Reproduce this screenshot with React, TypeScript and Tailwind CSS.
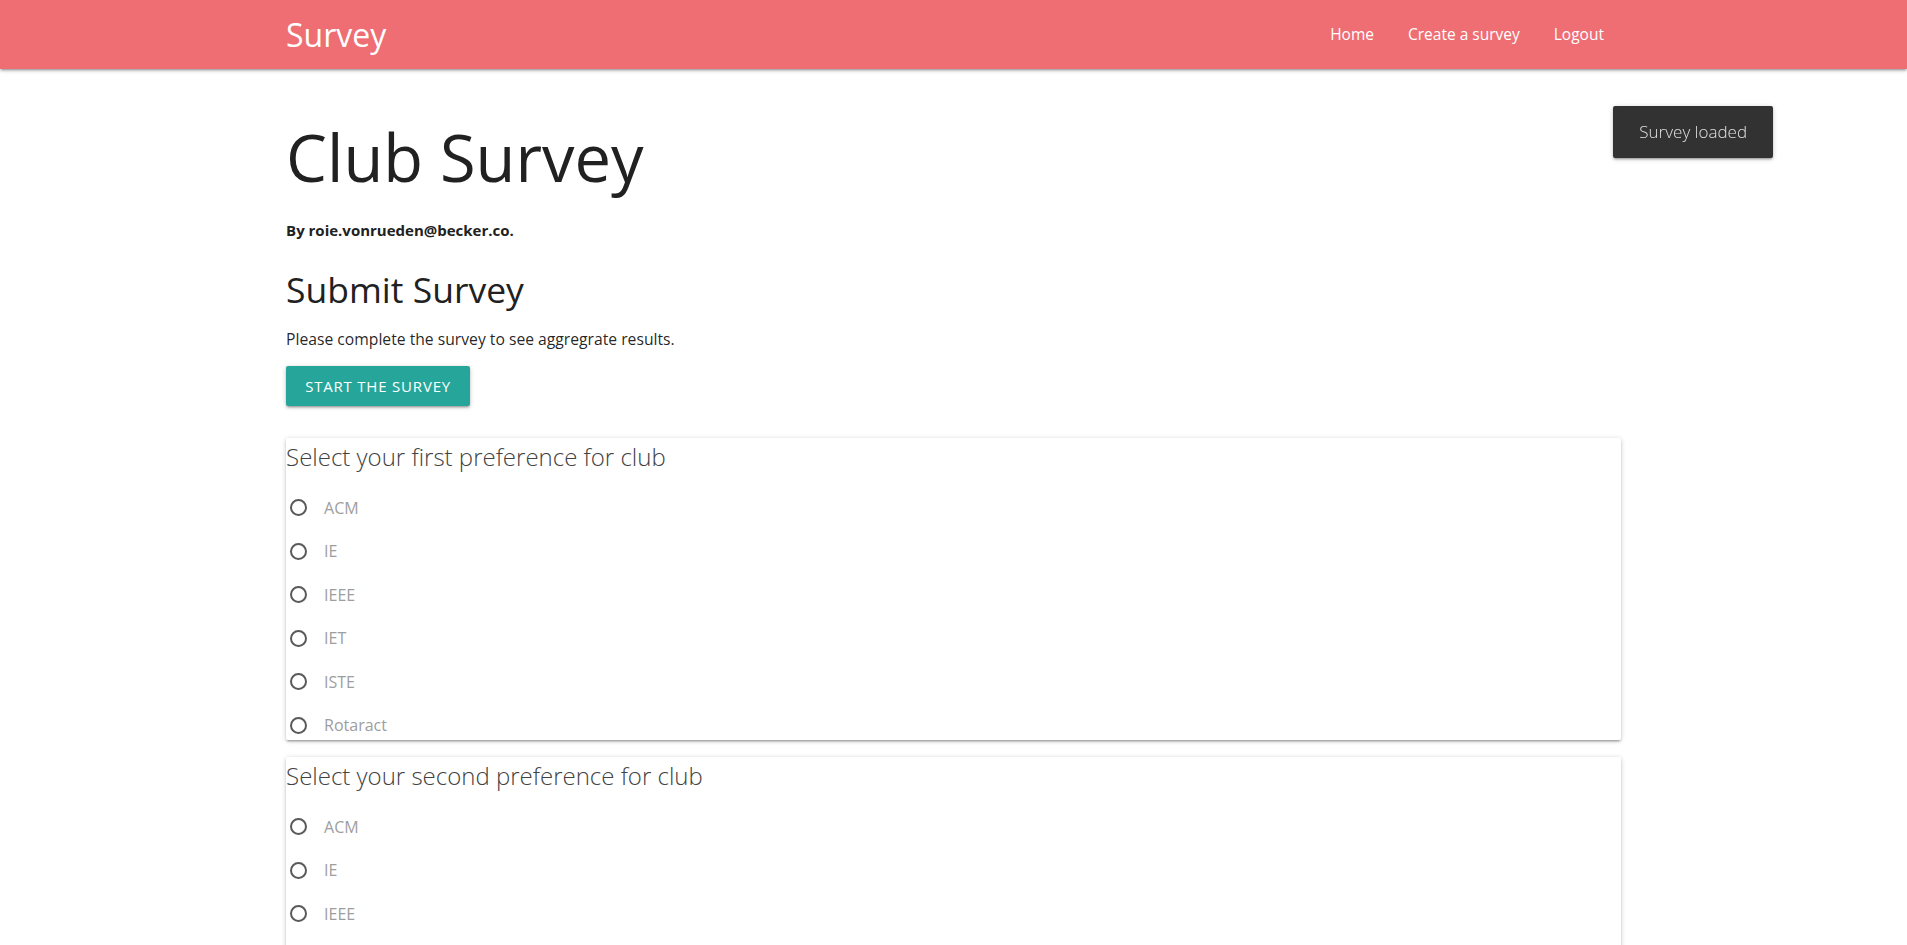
import { useState } from 'react';

const CLUBS = ['ACM', 'IE', 'IEEE', 'IET', 'ISTE', 'Rotaract'];

const QUESTIONS = [
  { id: 'first', title: 'Select your first preference for club' },
  { id: 'second', title: 'Select your second preference for club' },
];

function Radio({ name, label, checked, onChange }: { name: string; label: string; checked: boolean; onChange: () => void }) {
  return (
    <label className="flex h-[43.5px] cursor-pointer items-center">
      <input type="radio" name={name} checked={checked} onChange={onChange} className="sr-only" />
      <span
        className={`ml-[4px] h-[17px] w-[17px] shrink-0 rounded-full border-2 ${
          checked ? 'border-[#26a69a] bg-[#26a69a]' : 'border-[#5a5a5a]'
        }`}
      />
      <span className="ml-[17px] text-[16px] leading-[22px] text-[#9e9e9e]">{label}</span>
    </label>
  );
}

export default function App() {
  const [answers, setAnswers] = useState<Record<string, string>>({});

  return (
    <div className="min-h-screen bg-white font-['Open_Sans',sans-serif] text-[rgba(0,0,0,0.87)]">
      <nav className="relative z-10 h-[69px] bg-[#ee6e73] shadow-[0_2px_2px_0_rgba(0,0,0,0.14),0_3px_1px_-2px_rgba(0,0,0,0.12),0_1px_5px_0_rgba(0,0,0,0.2)]">
        <div className="mx-auto flex h-full w-[70%] items-center justify-between">
          <a href="#" className="text-[32px] leading-none text-white">
            Survey
          </a>
          <ul className="flex">
            {['Home', 'Create a survey', 'Logout'].map((item) => (
              <li key={item}>
                <a href="#" className="block px-[17px] text-[15.5px] text-white">
                  {item}
                </a>
              </li>
            ))}
          </ul>
        </div>
      </nav>

      <main className="mx-auto w-[70%] pb-10">
        <h1 className="mt-[52px] text-[65px] leading-[72px] font-normal text-[#212121]">Club Survey</h1>
        <p className="mt-[26px] text-[15px] leading-[22px] font-bold text-[#212121]">By roie.vonrueden@becker.co.</p>

        <h4 className="mt-[26px] text-[35.5px] leading-[44px] text-[#212121]">Submit Survey</h4>
        <p className="mt-[17px] text-[15.7px] leading-[22px]">Please complete the survey to see aggregrate results.</p>

        <button className="mt-[16px] h-[40px] w-[184px] rounded-[2px] bg-[#26a69a] text-[15px] tracking-[0.8px] text-white uppercase shadow-[0_2px_2px_0_rgba(0,0,0,0.14),0_3px_1px_-2px_rgba(0,0,0,0.12),0_1px_5px_0_rgba(0,0,0,0.2)]">
          Start the survey
        </button>

        <div className="mt-[32px] flex flex-col gap-[17px]">
          {QUESTIONS.map((q) => (
            <div
              key={q.id}
              className="h-[302px] overflow-hidden rounded-[2px] bg-white pt-[3px] shadow-[0_2px_2px_0_rgba(0,0,0,0.14),0_3px_1px_-2px_rgba(0,0,0,0.12),0_1px_5px_0_rgba(0,0,0,0.2)]"
            >
              <h5 className="text-[24px] leading-[32px] font-light text-[#424242]">{q.title}</h5>
              <div className="mt-[13px]">
                {CLUBS.map((club) => (
                  <Radio
                    key={club}
                    name={q.id}
                    label={club}
                    checked={answers[q.id] === club}
                    onChange={() => setAnswers((a) => ({ ...a, [q.id]: club }))}
                  />
                ))}
              </div>
            </div>
          ))}
        </div>
      </main>

      <div className="fixed top-[106px] right-[134px] z-20 flex h-[52px] items-center rounded-[2px] bg-[#323232] px-[26px] text-[17px] font-light text-[#e0e0e0] shadow-[0_2px_2px_0_rgba(0,0,0,0.14),0_3px_1px_-2px_rgba(0,0,0,0.12),0_1px_5px_0_rgba(0,0,0,0.2)]">
        Survey loaded
      </div>
    </div>
  );
}
